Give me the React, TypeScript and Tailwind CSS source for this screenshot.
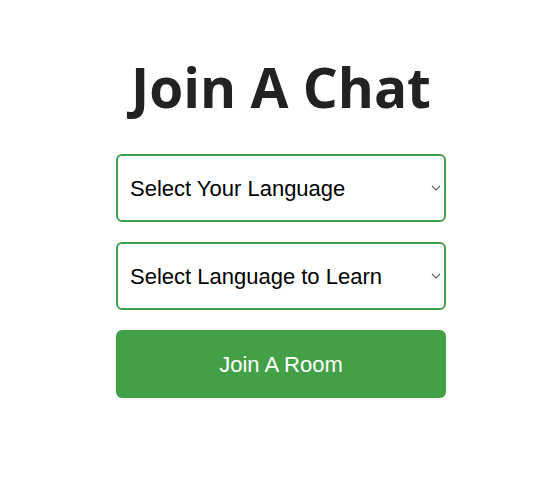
import type { FC } from 'react';

const Chevron: FC = () => (
  <svg
    className="pointer-events-none absolute right-[5px] top-1/2 -translate-y-1/2"
    width="10"
    height="6"
    viewBox="0 0 10 6"
    fill="none"
  >
    <path d="M1 1l4 4 4-4" stroke="#6f6f6f" strokeWidth="1.4" />
  </svg>
);

const LangSelect: FC<{ label: string }> = ({ label }) => (
  <div className="relative">
    <select
      defaultValue=""
      className="appearance-none h-[68px] w-full border-2 border-[#43a047] rounded-md bg-white pl-3 pr-6 text-[22px] text-black outline-none"
    >
      <option value="">{label}</option>
    </select>
    <Chevron />
  </div>
);

const App: FC = () => {
  return (
    <div className="min-h-screen bg-white flex flex-col items-center pt-[52px] pl-5">
      <h1 className="text-[55px] leading-[70px] font-bold text-[#222222] font-['Open_Sans',sans-serif]">
        Join A Chat
      </h1>
      <div className="mt-[32px] w-[330px] flex flex-col gap-5 font-['Liberation_Sans',Arial,sans-serif]">
        <LangSelect label="Select Your Language" />
        <LangSelect label="Select Language to Learn" />
        <button className="h-[68px] w-full rounded-md bg-[#43a047] text-white text-[22px]">
          Join A Room
        </button>
      </div>
    </div>
  );
};

export default App;
